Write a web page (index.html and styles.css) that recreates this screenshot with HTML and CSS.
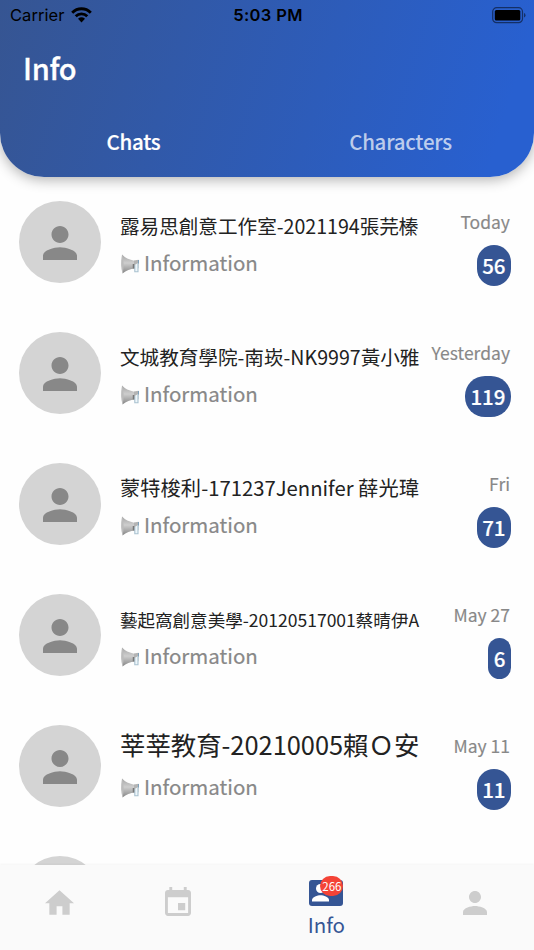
FILE: index.html
```html
<!DOCTYPE html>
<html lang="zh-Hant">
<head>
<meta charset="utf-8">
<title>Info</title>
<link rel="stylesheet" href="styles.css">
</head>
<body>
<svg class="defs" aria-hidden="true">
  <defs>
    <linearGradient id="cone" x1="0" y1="0" x2="0" y2="1"><stop offset="0" stop-color="#a5a5a5"/><stop offset=".45" stop-color="#cecece"/><stop offset="1" stop-color="#858585"/></linearGradient>
    <symbol id="person" viewBox="4 4 16 16"><path d="M12 12c2.21 0 4-1.79 4-4s-1.79-4-4-4-4 1.79-4 4 1.79 4 4 4zm0 2c-2.67 0-8 1.34-8 4v2h16v-2c0-2.66-5.33-4-8-4z"/></symbol>
    <symbol id="horn" viewBox="0 0 20 20">
      <path d="M2 .5Q6 5 15 7V14.500Q8 15 2.500 19.500Z" fill="url(#cone)"/>
      <path d="M2 .5Q5 9.500 2.500 19.500Q0 11 2 .5Z" fill="#bcbcbc"/>
      <path d="M14 6.600l4.500-.9v8.500l-4.500.3z" fill="#b4b4b4"/>
      <path d="M14.800 11v6.800h3.200V9" fill="#eef6fa" stroke="#a9c1cf" stroke-width="1.100"/>
      <path d="M18.500 6v3.500" stroke="#7fa3bd" stroke-width="1"/>
      <path d="M13.500 10v4.500" stroke="#777" stroke-width="1.500"/>
    </symbol>
  </defs>
</svg>
<div class="app">
  <header class="header">
    <div class="status">
      <div class="carrier"><span>Carrier</span>
        <svg class="wifi" viewBox="0 0 21 16"><g fill="none" stroke="#000" stroke-width="2.9"><path d="M1.2 5.7C6.500.5 14.500.5 19.800 5.700"/><path d="M4.700 9.300C8 6.100 13 6.100 16.300 9.300"/></g><path d="M7 11.700Q10.500 9 14 11.700L10.500 15.400Z"/></svg>
      </div>
      <div class="clock">5:03 PM</div>
      <svg class="battery" viewBox="0 0 34 17"><rect x=".7" y=".7" width="29.800" height="15" rx="4" fill="none" stroke="#000" stroke-opacity=".5" stroke-width="1.200"/><rect x="2.800" y="2.900" width="25.500" height="10.500" rx="1.500" /><path d="M32 6v4.500q1.500-.5 1.500-2.250T32 6z" opacity=".5"/></svg>
    </div>
    <h1 class="title">Info</h1>
    <nav class="tabs"><span class="tab tab-active">Chats</span><span class="tab">Characters</span></nav>
  </header>
  <main class="list">
    <article class="row">
      <div class="avatar"><svg><use href="#person"/></svg></div>
      <div class="body"><h2 class="name">露易思創意工作室-2021194張芫榛</h2><p class="message"><svg><use href="#horn"/></svg>Information</p></div>
      <div class="meta"><time>Today</time><span class="badge">56</span></div>
    </article>
    <article class="row">
      <div class="avatar"><svg><use href="#person"/></svg></div>
      <div class="body"><h2 class="name">文城教育學院-南崁-NK9997黃小雅</h2><p class="message"><svg><use href="#horn"/></svg>Information</p></div>
      <div class="meta"><time>Yesterday</time><span class="badge">119</span></div>
    </article>
    <article class="row">
      <div class="avatar"><svg><use href="#person"/></svg></div>
      <div class="body"><h2 class="name name-medium">蒙特梭利-171237Jennifer 薛光瑋</h2><p class="message"><svg><use href="#horn"/></svg>Information</p></div>
      <div class="meta"><time>Fri</time><span class="badge">71</span></div>
    </article>
    <article class="row">
      <div class="avatar"><svg><use href="#person"/></svg></div>
      <div class="body"><h2 class="name name-small">藝起窩創意美學-20120517001蔡晴伊A</h2><p class="message"><svg><use href="#horn"/></svg>Information</p></div>
      <div class="meta"><time>May 27</time><span class="badge">6</span></div>
    </article>
    <article class="row">
      <div class="avatar"><svg><use href="#person"/></svg></div>
      <div class="body"><h2 class="name name-large">莘莘教育-20210005賴Ｏ安</h2><p class="message"><svg><use href="#horn"/></svg>Information</p></div>
      <div class="meta"><time>May 11</time><span class="badge">11</span></div>
    </article>
    <article class="row">
      <div class="avatar"></div>
    </article>
  </main>
  <nav class="bottom">
    <div class="item"><svg class="home" viewBox="2 3 20 17"><path d="M10 20v-6h4v6h5v-8h3L12 3 2 12h3v8z"/></svg></div>
    <div class="item"><svg class="calendar" viewBox="3 1 18 20"><path d="M17 12h-5v5h5v-5zM16 1v2H8V1H6v2H5c-1.110 0-1.990.9-1.990 2L3 19c0 1.100.89 2 2 2h14c1.100 0 2-.9 2-2V5c0-1.100-.9-2-2-2h-1V1h-2zm3 18H5V8h14v11z"/></svg></div>
    <div class="item item-active">
      <div class="contact"><svg viewBox="0 0 34 26"><rect width="34" height="26" rx="3"/><g fill="#fff"><circle cx="11.500" cy="8.500" r="4.500"/><path d="M3 21.500v-1.500c0-3 5.500-4.800 8.500-4.800s8.500 1.800 8.500 4.800v1.500z"/></g></svg><span class="count">266</span></div>
      <span class="label">Info</span>
    </div>
    <div class="item"><svg class="profile"><use href="#person"/></svg></div>
  </nav>
</div>
</body>
</html>
```
FILE: styles.css
```css
* { box-sizing: border-box; }
body, h1, h2, p { margin: 0; }
body { background: #fefefe; font-family: "Noto Sans CJK TC", sans-serif; font-weight: 400; }
.defs { position: absolute; width: 0; height: 0; }
.app { height: 950px; display: flex; flex-direction: column; overflow: hidden; }
.header { position: relative; height: 177px; flex: none; border-radius: 0 0 44px 44px; background: linear-gradient(107deg, #365592 0%, #2860d0 92%); box-shadow: 0 3px 13px rgba(0,0,0,.3); color: #fff; }
.status { height: 30px; padding: 0 8px 0 10px; display: grid; grid-template-columns: 1fr auto 1fr; align-items: center; color: #000; font: 400 16.500px/30px Inter, sans-serif; }
.carrier { display: flex; align-items: center; gap: 7px; letter-spacing: .05px; }
.wifi { width: 21px; height: 16px; }
.clock { font-weight: 600; letter-spacing: .35px; }
.battery { width: 34px; height: 17px; justify-self: end; }
.title { padding-left: 23px; margin-top: 13px; font-size: 29px; line-height: 48px; font-weight: 500; letter-spacing: -.3px; -webkit-text-stroke: .3px #fff; }
.tabs { display: flex; margin-top: 34px; }
.tab { flex: 1; text-align: center; font-size: 20.500px; line-height: 32px; font-weight: 500; letter-spacing: -.25px; color: rgba(255,255,255,.7); }
.tab-active { color: #fff; -webkit-text-stroke: .2px #fff; }
.list { flex: 1; min-height: 0; overflow: hidden; }
.row { height: 131px; padding: 24px 24px 24px 19px; display: flex; align-items: flex-start; }
.avatar { width: 82px; height: 82px; flex: none; border-radius: 50%; background: #d4d4d4; display: flex; align-items: center; justify-content: center; }
.avatar svg { width: 34px; height: 34px; margin-top: 1px; fill: #888; }
.body { width: 300px; flex: none; margin-left: 19px; padding-top: 4px; }
.name { height: 39px; font-size: 19.600px; line-height: 41px; font-weight: 400; white-space: nowrap; color: #222; }
.name-medium { font-size: 20.300px; }
.name-small { font-size: 17.550px; line-height: 43px; }
.name-large { font-size: 25.400px; line-height: 31px; }
.message { display: flex; align-items: center; gap: 4px; font-size: 20.500px; line-height: 36px; color: #888; -webkit-text-stroke: .2px #888; }
.message svg { width: 20px; height: 20px; margin-top: 3px; }
.meta { flex: 1; display: flex; flex-direction: column; align-items: flex-end; white-space: nowrap; }
time { margin-top: 4px; font-size: 17.500px; line-height: 34px; color: #888; -webkit-text-stroke: .15px #888; }
.badge { margin: 6px -1px 0 0; height: 41px; padding: 0 5.500px; border-radius: 20px; background: #355594; color: #fff; font-size: 20.500px; line-height: 41px; font-weight: 500; -webkit-text-stroke: .2px #fff; }
.bottom { position: relative; height: 85px; flex: none; display: flex; background: #fafafa; box-shadow: 0 -1px 2px rgba(0,0,0,.04); fill: #cdcdcd; }
.item { flex: 2; display: flex; justify-content: center; align-items: flex-start; }
.item-active { flex: 3; flex-direction: column; align-items: center; justify-content: flex-start; color: #355594; fill: #355594; }
.home { width: 29px; height: 25px; margin-top: 25px; }
.calendar { width: 26px; height: 29px; margin-top: 22px; }
.profile { width: 24px; height: 24px; margin-top: 26px; }
.contact { position: relative; width: 34px; height: 26px; margin-top: 15px; }
.contact svg { display: block; width: 34px; height: 26px; }
.count { position: absolute; top: -4px; right: 0; width: 23px; height: 20px; border-radius: 10px; background: #f44336; color: #fff; font-size: 11.500px; line-height: 20px; text-align: center; }
.label { font-size: 20.500px; line-height: 32px; margin-top: 2px; }
```
